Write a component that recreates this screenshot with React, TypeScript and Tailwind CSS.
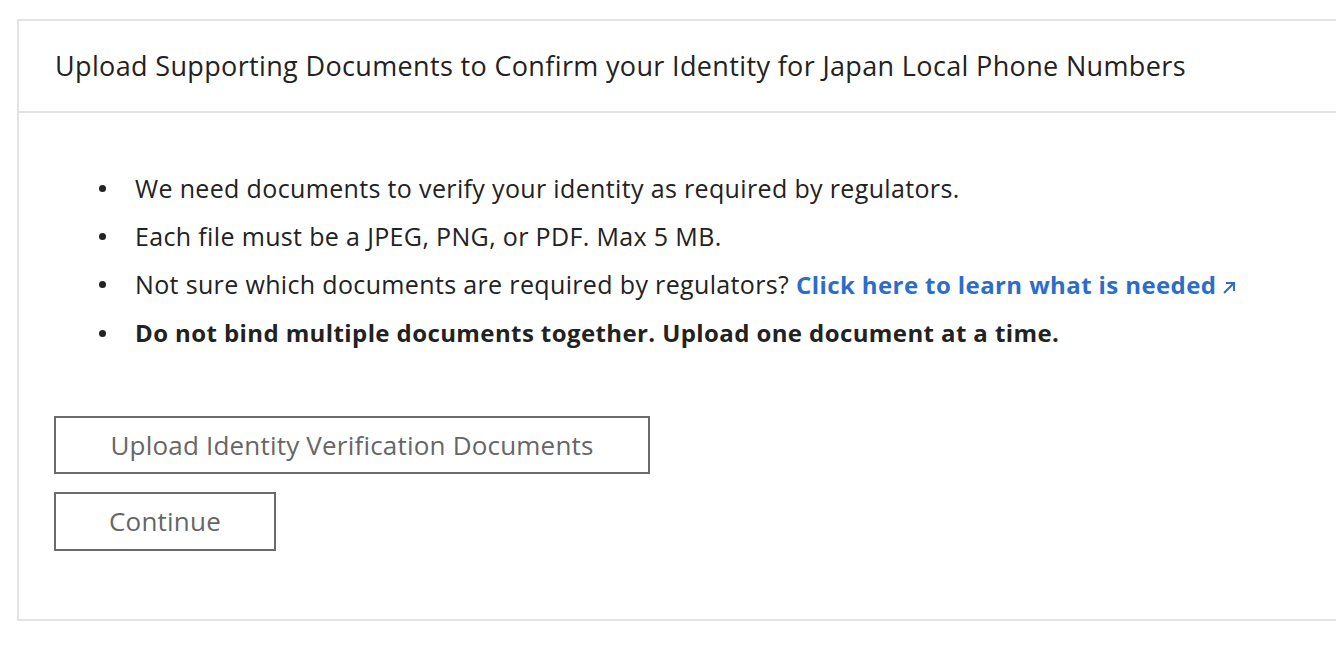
function Dot() {
  return (
    <span className="flex w-[80px] pl-[44px]">
      <span className="h-[7px] w-[7px] rounded-full bg-[#222]" />
    </span>
  );
}

export default function App() {
  return (
    <div className="min-h-[646px] w-[1336px] bg-white pl-[17px] pt-[19px] font-['Open_Sans','Liberation_Sans',sans-serif] text-[#222]">
      <div className="w-[1340px] border-2 border-r-0 border-[#e3e3e3]">
        <div className="flex h-[92px] items-center border-b-2 border-[#e3e3e3] pl-[36px]">
          <h1 className="text-[27px] tracking-[0.35px] text-[#222]">
            Upload Supporting Documents to Confirm your Identity for Japan Local Phone Numbers
          </h1>
        </div>
        <div className="pl-[35px] pt-[51px] pb-[68px]">
          <ul className="flex flex-col pl-[1px] text-[25px] leading-[48px] tracking-[0.35px]">
            <li className="flex items-center">
              <Dot />
              <span>We need documents to verify your identity as required by regulators.</span>
            </li>
            <li className="flex items-center">
              <Dot />
              <span>Each file must be a JPEG, PNG, or PDF. Max 5 MB.</span>
            </li>
            <li className="flex items-center">
              <Dot />
              <span>
                Not sure which documents are required by regulators?{' '}
                <a className="text-[24px] font-bold tracking-[0.4px] text-[#2b6dc9]" href="#">
                  Click here to learn what is needed
                  <svg className="ml-[6px] inline-block h-[14px] w-[14px] align-[-1px]" viewBox="0 0 14 14" fill="none" stroke="#2b6dc9" strokeWidth="2">
                    <path d="M2 12L12 2M4 2h8v8" />
                  </svg>
                </a>
              </span>
            </li>
            <li className="flex items-center text-[24px] font-bold tracking-[0.4px]">
              <Dot />
              <span>Do not bind multiple documents together. Upload one document at a time.</span>
            </li>
          </ul>
          <div className="mt-[59px] flex flex-col items-start gap-[18px]">
            <button className="h-[58px] w-[596px] border-2 border-[#6b6b6b] text-[26px] tracking-[0.2px] text-[#666]">
              Upload Identity Verification Documents
            </button>
            <button className="h-[59px] w-[222px] border-2 border-[#6b6b6b] text-[26px] tracking-[0.2px] text-[#666]">
              Continue
            </button>
          </div>
        </div>
      </div>
    </div>
  );
}
